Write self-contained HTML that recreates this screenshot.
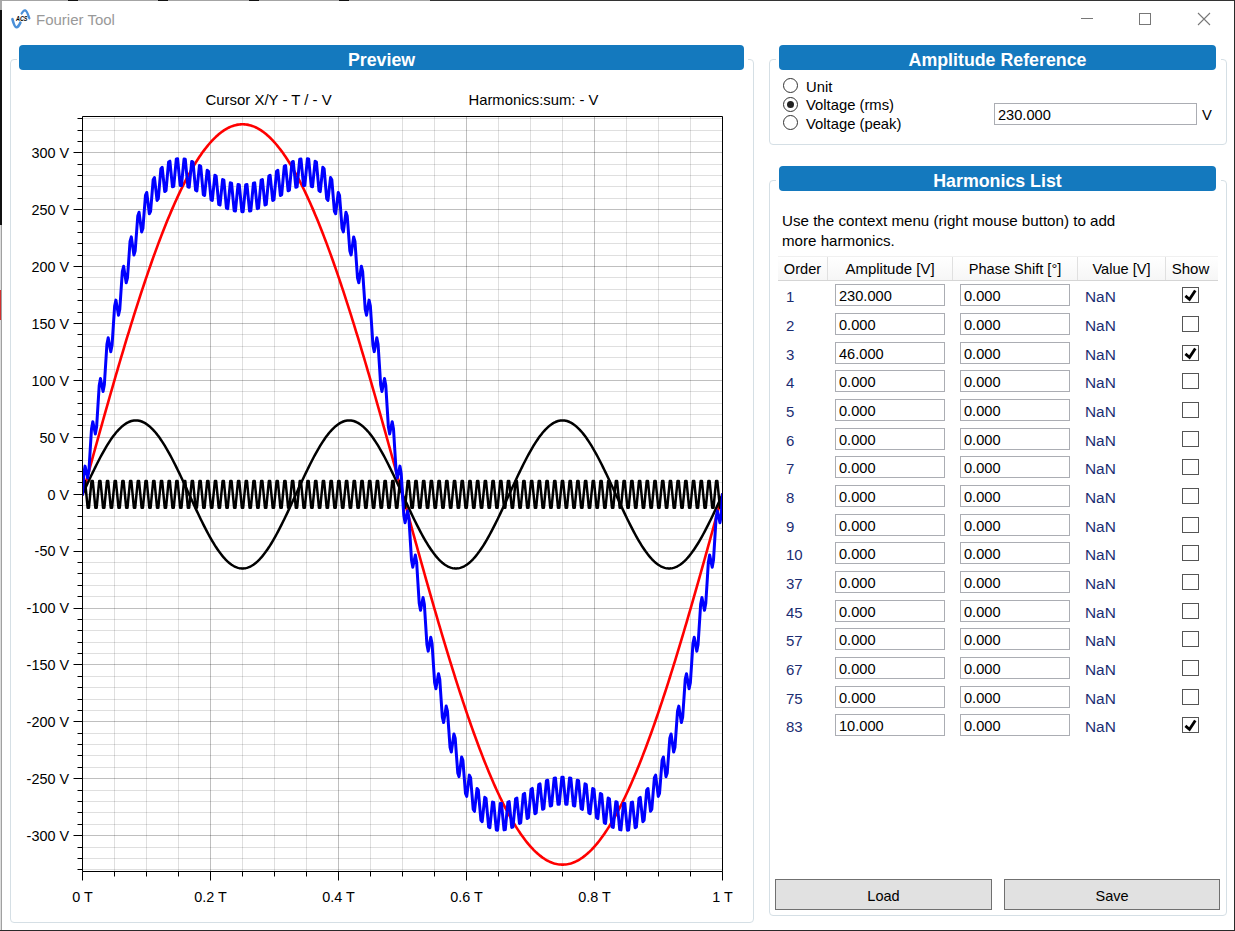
<!DOCTYPE html>
<html><head><meta charset="utf-8"><style>
html,body{margin:0;padding:0;}
body{width:1235px;height:931px;position:relative;overflow:hidden;background:#fff;font-family:"Liberation Sans", sans-serif;color:#000;}
.abs{position:absolute;}
.gb{position:absolute;border:1px solid #d5dfe5;border-radius:4px;box-sizing:border-box;}
.hdr{position:absolute;background:#1479be;border-radius:4px;color:#fff;font-weight:bold;font-size:17.8px;text-align:center;box-sizing:border-box;line-height:25px;padding-top:3px;}
.msk{position:absolute;background:#fff;height:3px;}
.tb{position:absolute;height:22px;border:1px solid #abadb3;box-sizing:border-box;font-size:14.6px;line-height:20px;padding-left:3px;padding-top:1px;background:#fff;}
.ord{position:absolute;left:786px;height:22px;line-height:22px;padding-top:1.5px;font-size:15px;color:#1b2d72;}
.nan{position:absolute;left:1085px;height:22px;line-height:22px;padding-top:1.5px;font-size:15.4px;color:#1b2d72;}
.cb{position:absolute;left:1182px;width:17px;height:16px;border:1px solid #555;box-sizing:border-box;background:#fff;}
.th{position:absolute;top:257px;height:24px;line-height:24px;font-size:14.6px;text-align:center;}
.btn{position:absolute;top:879px;height:31px;background:#e1e1e1;border:1px solid #707070;box-sizing:border-box;font-size:14.5px;line-height:29px;padding-top:2px;text-align:center;}
.rad{position:absolute;left:783px;width:15px;height:15px;border:1px solid #333;border-radius:50%;box-sizing:border-box;background:#fff;}
.rl{position:absolute;left:806px;font-size:14.8px;line-height:18px;}
</style></head><body>
<!-- window frame -->
<div class="abs" style="left:0;top:0;width:2px;height:10px;background:#a8a8a8"></div>
<div class="abs" style="left:0;top:10px;width:2px;height:215px;background:#111"></div>
<div class="abs" style="left:0;top:225px;width:1px;height:706px;background:#dcdcdc"></div>
<div class="abs" style="left:1px;top:225px;width:1px;height:706px;background:#a0a0a0"></div>
<div class="abs" style="left:0;top:290px;width:1px;height:30px;background:#d03030"></div>
<div class="abs" style="left:0;top:0;width:430px;height:1px;background:#a4a4a4"></div>
<div class="abs" style="left:68px;top:0;width:10px;height:1px;background:#111"></div>
<div class="abs" style="left:158px;top:0;width:10px;height:1px;background:#111"></div>
<div class="abs" style="left:249px;top:0;width:10px;height:1px;background:#111"></div>
<div class="abs" style="left:339px;top:0;width:10px;height:1px;background:#111"></div>
<div class="abs" style="left:430px;top:0;width:805px;height:1px;background:#333"></div>
<div class="abs" style="left:1234px;top:0;width:1px;height:931px;background:#2a2a2a"></div>
<div class="abs" style="left:0;top:930px;width:1235px;height:1px;background:#2a2a2a"></div>

<!-- title bar -->
<svg class="abs" style="left:0;top:0" width="40" height="36">
<path d="M12.4,19.2 Q14.6,27.6 16.5,27.3 Q18.4,27 20.4,22.6" stroke="#4a8fd8" stroke-width="2.6" fill="none" stroke-linecap="round"/>
<path d="M21.6,13.6 Q23.6,9.9 25.2,10.4 Q27,11 29.4,18.4" stroke="#4a8fd8" stroke-width="2.2" fill="none" stroke-linecap="round"/>
<text x="16" y="21.4" font-family='"Liberation Sans", sans-serif' font-size="7" font-weight="bold" font-style="italic" fill="#000" textLength="11.5" lengthAdjust="spacingAndGlyphs">ACS</text>
</svg>
<div class="abs" style="left:36px;top:10px;font-size:15px;line-height:20px;color:#999">Fourier Tool</div>
<div class="abs" style="left:1081px;top:18px;width:12px;height:1px;background:#777"></div>
<div class="abs" style="left:1139px;top:13px;width:12px;height:12px;border:1px solid #777;box-sizing:border-box"></div>
<svg class="abs" style="left:1197px;top:12px" width="14" height="14"><path d="M1,1 L13,13 M13,1 L1,13" stroke="#777" stroke-width="1.1"/></svg>

<!-- group boxes -->
<div class="gb" style="left:10px;top:59px;width:744px;height:864px"></div>
<div class="gb" style="left:769px;top:59px;width:458px;height:86px"></div>
<div class="gb" style="left:769px;top:180px;width:458px;height:736px"></div>
<div class="msk" style="left:17px;top:58px;width:731px"></div><div class="msk" style="left:776px;top:58px;width:445px"></div><div class="msk" style="left:776px;top:179px;width:445px"></div>
<div class="hdr" style="left:19px;top:45px;width:725px;height:25px">Preview</div>
<div class="hdr" style="left:779px;top:45px;width:437px;height:25px">Amplitude Reference</div>
<div class="hdr" style="left:779px;top:166px;width:437px;height:25px">Harmonics List</div>

<svg class="abs" style="left:0;top:0" width="1235" height="931"><defs><clipPath id="pc"><rect x="82" y="116" width="641" height="756"/></clipPath></defs><path d="M114.5,116.5V871.5M146.5,116.5V871.5M178.5,116.5V871.5M242.5,116.5V871.5M274.5,116.5V871.5M306.5,116.5V871.5M370.5,116.5V871.5M402.5,116.5V871.5M434.5,116.5V871.5M498.5,116.5V871.5M530.5,116.5V871.5M562.5,116.5V871.5M626.5,116.5V871.5M658.5,116.5V871.5M690.5,116.5V871.5M82.5,869.5H722.5M82.5,858.5H722.5M82.5,847.5H722.5M82.5,824.5H722.5M82.5,812.5H722.5M82.5,801.5H722.5M82.5,790.5H722.5M82.5,767.5H722.5M82.5,755.5H722.5M82.5,744.5H722.5M82.5,733.5H722.5M82.5,710.5H722.5M82.5,699.5H722.5M82.5,687.5H722.5M82.5,676.5H722.5M82.5,653.5H722.5M82.5,642.5H722.5M82.5,630.5H722.5M82.5,619.5H722.5M82.5,596.5H722.5M82.5,585.5H722.5M82.5,573.5H722.5M82.5,562.5H722.5M82.5,539.5H722.5M82.5,528.5H722.5M82.5,516.5H722.5M82.5,505.5H722.5M82.5,482.5H722.5M82.5,471.5H722.5M82.5,460.5H722.5M82.5,448.5H722.5M82.5,425.5H722.5M82.5,414.5H722.5M82.5,403.5H722.5M82.5,391.5H722.5M82.5,369.5H722.5M82.5,357.5H722.5M82.5,346.5H722.5M82.5,334.5H722.5M82.5,312.5H722.5M82.5,300.5H722.5M82.5,289.5H722.5M82.5,277.5H722.5M82.5,255.5H722.5M82.5,243.5H722.5M82.5,232.5H722.5M82.5,221.5H722.5M82.5,198.5H722.5M82.5,186.5H722.5M82.5,175.5H722.5M82.5,164.5H722.5M82.5,141.5H722.5M82.5,130.5H722.5M82.5,118.5H722.5" stroke="rgba(0,0,0,0.125)" stroke-width="1" fill="none"/><path d="M82.5,116.5V871.5M210.5,116.5V871.5M338.5,116.5V871.5M466.5,116.5V871.5M594.5,116.5V871.5M722.5,116.5V871.5M82.5,835.5H722.5M82.5,778.5H722.5M82.5,721.5H722.5M82.5,664.5H722.5M82.5,608.5H722.5M82.5,551.5H722.5M82.5,494.5H722.5M82.5,437.5H722.5M82.5,380.5H722.5M82.5,323.5H722.5M82.5,266.5H722.5M82.5,209.5H722.5M82.5,152.5H722.5" stroke="rgba(0,0,0,0.25)" stroke-width="1" fill="none"/><g clip-path="url(#pc)" fill="none" stroke-linejoin="round" stroke-linecap="round"><path d="M82.50,494.45 L83.79,489.78 L85.07,485.11 L86.36,480.44 L87.64,475.78 L88.93,471.11 L90.21,466.45 L91.50,461.80 L92.78,457.15 L94.07,452.50 L95.35,447.87 L96.64,443.24 L97.92,438.62 L99.21,434.00 L100.49,429.40 L101.78,424.81 L103.06,420.23 L104.35,415.66 L105.63,411.10 L106.92,406.56 L108.20,402.03 L109.49,397.51 L110.77,393.01 L112.06,388.53 L113.34,384.06 L114.63,379.61 L115.91,375.18 L117.20,370.77 L118.48,366.38 L119.77,362.00 L121.05,357.65 L122.34,353.32 L123.62,349.02 L124.91,344.73 L126.19,340.47 L127.48,336.24 L128.77,332.03 L130.05,327.85 L131.34,323.69 L132.62,319.56 L133.91,315.46 L135.19,311.38 L136.48,307.34 L137.76,303.32 L139.05,299.34 L140.33,295.38 L141.62,291.46 L142.90,287.57 L144.19,283.72 L145.47,279.89 L146.76,276.10 L148.04,272.35 L149.33,268.63 L150.61,264.95 L151.90,261.30 L153.18,257.69 L154.47,254.12 L155.75,250.59 L157.04,247.09 L158.32,243.64 L159.61,240.22 L160.89,236.85 L162.18,233.51 L163.46,230.22 L164.75,226.97 L166.03,223.76 L167.32,220.60 L168.60,217.48 L169.89,214.40 L171.17,211.37 L172.46,208.38 L173.74,205.44 L175.03,202.55 L176.32,199.70 L177.60,196.89 L178.89,194.14 L180.17,191.43 L181.46,188.77 L182.74,186.16 L184.03,183.60 L185.31,181.09 L186.60,178.63 L187.88,176.22 L189.17,173.86 L190.45,171.55 L191.74,169.29 L193.02,167.08 L194.31,164.93 L195.59,162.83 L196.88,160.78 L198.16,158.78 L199.45,156.84 L200.73,154.95 L202.02,153.11 L203.30,151.33 L204.59,149.61 L205.87,147.94 L207.16,146.32 L208.44,144.76 L209.73,143.26 L211.01,141.81 L212.30,140.41 L213.58,139.08 L214.87,137.80 L216.15,136.57 L217.44,135.41 L218.72,134.30 L220.01,133.25 L221.30,132.25 L222.58,131.32 L223.87,130.44 L225.15,129.62 L226.44,128.86 L227.72,128.15 L229.01,127.50 L230.29,126.92 L231.58,126.39 L232.86,125.92 L234.15,125.51 L235.43,125.15 L236.72,124.86 L238.00,124.62 L239.29,124.45 L240.57,124.33 L241.86,124.27 L243.14,124.27 L244.43,124.33 L245.71,124.45 L247.00,124.62 L248.28,124.86 L249.57,125.15 L250.85,125.51 L252.14,125.92 L253.42,126.39 L254.71,126.92 L255.99,127.50 L257.28,128.15 L258.56,128.86 L259.85,129.62 L261.13,130.44 L262.42,131.32 L263.70,132.25 L264.99,133.25 L266.28,134.30 L267.56,135.41 L268.85,136.57 L270.13,137.80 L271.42,139.08 L272.70,140.41 L273.99,141.81 L275.27,143.26 L276.56,144.76 L277.84,146.32 L279.13,147.94 L280.41,149.61 L281.70,151.33 L282.98,153.11 L284.27,154.95 L285.55,156.84 L286.84,158.78 L288.12,160.78 L289.41,162.83 L290.69,164.93 L291.98,167.08 L293.26,169.29 L294.55,171.55 L295.83,173.86 L297.12,176.22 L298.40,178.63 L299.69,181.09 L300.97,183.60 L302.26,186.16 L303.54,188.77 L304.83,191.43 L306.11,194.14 L307.40,196.89 L308.68,199.70 L309.97,202.55 L311.26,205.44 L312.54,208.38 L313.83,211.37 L315.11,214.40 L316.40,217.48 L317.68,220.60 L318.97,223.76 L320.25,226.97 L321.54,230.22 L322.82,233.51 L324.11,236.85 L325.39,240.22 L326.68,243.64 L327.96,247.09 L329.25,250.59 L330.53,254.12 L331.82,257.69 L333.10,261.30 L334.39,264.95 L335.67,268.63 L336.96,272.35 L338.24,276.10 L339.53,279.89 L340.81,283.72 L342.10,287.57 L343.38,291.46 L344.67,295.38 L345.95,299.34 L347.24,303.32 L348.52,307.34 L349.81,311.38 L351.09,315.46 L352.38,319.56 L353.66,323.69 L354.95,327.85 L356.23,332.03 L357.52,336.24 L358.81,340.47 L360.09,344.73 L361.38,349.02 L362.66,353.32 L363.95,357.65 L365.23,362.00 L366.52,366.38 L367.80,370.77 L369.09,375.18 L370.37,379.61 L371.66,384.06 L372.94,388.53 L374.23,393.01 L375.51,397.51 L376.80,402.03 L378.08,406.56 L379.37,411.10 L380.65,415.66 L381.94,420.23 L383.22,424.81 L384.51,429.40 L385.79,434.00 L387.08,438.62 L388.36,443.24 L389.65,447.87 L390.93,452.50 L392.22,457.15 L393.50,461.80 L394.79,466.45 L396.07,471.11 L397.36,475.78 L398.64,480.44 L399.93,485.11 L401.21,489.78 L402.50,494.45 L403.79,499.12 L405.07,503.79 L406.36,508.46 L407.64,513.12 L408.93,517.79 L410.21,522.45 L411.50,527.10 L412.78,531.75 L414.07,536.40 L415.35,541.03 L416.64,545.66 L417.92,550.28 L419.21,554.90 L420.49,559.50 L421.78,564.09 L423.06,568.67 L424.35,573.24 L425.63,577.80 L426.92,582.34 L428.20,586.87 L429.49,591.39 L430.77,595.89 L432.06,600.37 L433.34,604.84 L434.63,609.29 L435.91,613.72 L437.20,618.13 L438.48,622.52 L439.77,626.90 L441.05,631.25 L442.34,635.58 L443.62,639.88 L444.91,644.17 L446.19,648.43 L447.48,652.66 L448.77,656.87 L450.05,661.05 L451.34,665.21 L452.62,669.34 L453.91,673.44 L455.19,677.52 L456.48,681.56 L457.76,685.58 L459.05,689.56 L460.33,693.52 L461.62,697.44 L462.90,701.33 L464.19,705.18 L465.47,709.01 L466.76,712.80 L468.04,716.55 L469.33,720.27 L470.61,723.95 L471.90,727.60 L473.18,731.21 L474.47,734.78 L475.75,738.31 L477.04,741.81 L478.32,745.26 L479.61,748.68 L480.89,752.05 L482.18,755.39 L483.46,758.68 L484.75,761.93 L486.03,765.14 L487.32,768.30 L488.60,771.42 L489.89,774.50 L491.17,777.53 L492.46,780.52 L493.74,783.46 L495.03,786.35 L496.32,789.20 L497.60,792.01 L498.89,794.76 L500.17,797.47 L501.46,800.13 L502.74,802.74 L504.03,805.30 L505.31,807.81 L506.60,810.27 L507.88,812.68 L509.17,815.04 L510.45,817.35 L511.74,819.61 L513.02,821.82 L514.31,823.97 L515.59,826.07 L516.88,828.12 L518.16,830.12 L519.45,832.06 L520.73,833.95 L522.02,835.79 L523.30,837.57 L524.59,839.29 L525.87,840.96 L527.16,842.58 L528.44,844.14 L529.73,845.64 L531.01,847.09 L532.30,848.49 L533.58,849.82 L534.87,851.10 L536.15,852.33 L537.44,853.49 L538.72,854.60 L540.01,855.65 L541.30,856.65 L542.58,857.58 L543.87,858.46 L545.15,859.28 L546.44,860.04 L547.72,860.75 L549.01,861.40 L550.29,861.98 L551.58,862.51 L552.86,862.98 L554.15,863.39 L555.43,863.75 L556.72,864.04 L558.00,864.28 L559.29,864.45 L560.57,864.57 L561.86,864.63 L563.14,864.63 L564.43,864.57 L565.71,864.45 L567.00,864.28 L568.28,864.04 L569.57,863.75 L570.85,863.39 L572.14,862.98 L573.42,862.51 L574.71,861.98 L575.99,861.40 L577.28,860.75 L578.56,860.04 L579.85,859.28 L581.13,858.46 L582.42,857.58 L583.70,856.65 L584.99,855.65 L586.28,854.60 L587.56,853.49 L588.85,852.33 L590.13,851.10 L591.42,849.82 L592.70,848.49 L593.99,847.09 L595.27,845.64 L596.56,844.14 L597.84,842.58 L599.13,840.96 L600.41,839.29 L601.70,837.57 L602.98,835.79 L604.27,833.95 L605.55,832.06 L606.84,830.12 L608.12,828.12 L609.41,826.07 L610.69,823.97 L611.98,821.82 L613.26,819.61 L614.55,817.35 L615.83,815.04 L617.12,812.68 L618.40,810.27 L619.69,807.81 L620.97,805.30 L622.26,802.74 L623.54,800.13 L624.83,797.47 L626.11,794.76 L627.40,792.01 L628.68,789.20 L629.97,786.35 L631.26,783.46 L632.54,780.52 L633.83,777.53 L635.11,774.50 L636.40,771.42 L637.68,768.30 L638.97,765.14 L640.25,761.93 L641.54,758.68 L642.82,755.39 L644.11,752.05 L645.39,748.68 L646.68,745.26 L647.96,741.81 L649.25,738.31 L650.53,734.78 L651.82,731.21 L653.10,727.60 L654.39,723.95 L655.67,720.27 L656.96,716.55 L658.24,712.80 L659.53,709.01 L660.81,705.18 L662.10,701.33 L663.38,697.44 L664.67,693.52 L665.95,689.56 L667.24,685.58 L668.52,681.56 L669.81,677.52 L671.09,673.44 L672.38,669.34 L673.66,665.21 L674.95,661.05 L676.23,656.87 L677.52,652.66 L678.81,648.43 L680.09,644.17 L681.38,639.88 L682.66,635.58 L683.95,631.25 L685.23,626.90 L686.52,622.52 L687.80,618.13 L689.09,613.72 L690.37,609.29 L691.66,604.84 L692.94,600.37 L694.23,595.89 L695.51,591.39 L696.80,586.87 L698.08,582.34 L699.37,577.80 L700.65,573.24 L701.94,568.67 L703.22,564.09 L704.51,559.50 L705.79,554.90 L707.08,550.28 L708.36,545.66 L709.65,541.03 L710.93,536.40 L712.22,531.75 L713.50,527.10 L714.79,522.45 L716.07,517.79 L717.36,513.12 L718.64,508.46 L719.93,503.79 L721.21,499.12 L722.50,494.45" stroke="#ff0000" stroke-width="2.6"/><path d="M82.50,494.45 L83.79,491.65 L85.07,488.85 L86.36,486.06 L87.64,483.28 L88.93,480.52 L90.21,477.78 L91.50,475.06 L92.78,472.37 L94.07,469.71 L95.35,467.09 L96.64,464.51 L97.92,461.97 L99.21,459.47 L100.49,457.03 L101.78,454.64 L103.06,452.30 L104.35,450.03 L105.63,447.82 L106.92,445.68 L108.20,443.60 L109.49,441.60 L110.77,439.68 L112.06,437.83 L113.34,436.07 L114.63,434.39 L115.91,432.79 L117.20,431.29 L118.48,429.87 L119.77,428.55 L121.05,427.32 L122.34,426.18 L123.62,425.15 L124.91,424.21 L126.19,423.38 L127.48,422.64 L128.77,422.01 L130.05,421.48 L131.34,421.06 L132.62,420.74 L133.91,420.53 L135.19,420.43 L136.48,420.43 L137.76,420.53 L139.05,420.74 L140.33,421.06 L141.62,421.48 L142.90,422.01 L144.19,422.64 L145.47,423.38 L146.76,424.21 L148.04,425.15 L149.33,426.18 L150.61,427.32 L151.90,428.55 L153.18,429.87 L154.47,431.29 L155.75,432.79 L157.04,434.39 L158.32,436.07 L159.61,437.83 L160.89,439.68 L162.18,441.60 L163.46,443.60 L164.75,445.68 L166.03,447.82 L167.32,450.03 L168.60,452.30 L169.89,454.64 L171.17,457.03 L172.46,459.47 L173.74,461.97 L175.03,464.51 L176.32,467.09 L177.60,469.71 L178.89,472.37 L180.17,475.06 L181.46,477.78 L182.74,480.52 L184.03,483.28 L185.31,486.06 L186.60,488.85 L187.88,491.65 L189.17,494.45 L190.45,497.25 L191.74,500.05 L193.02,502.84 L194.31,505.62 L195.59,508.38 L196.88,511.12 L198.16,513.84 L199.45,516.53 L200.73,519.19 L202.02,521.81 L203.30,524.39 L204.59,526.93 L205.87,529.43 L207.16,531.87 L208.44,534.26 L209.73,536.60 L211.01,538.87 L212.30,541.08 L213.58,543.22 L214.87,545.30 L216.15,547.30 L217.44,549.22 L218.72,551.07 L220.01,552.83 L221.30,554.51 L222.58,556.11 L223.87,557.61 L225.15,559.03 L226.44,560.35 L227.72,561.58 L229.01,562.72 L230.29,563.75 L231.58,564.69 L232.86,565.52 L234.15,566.26 L235.43,566.89 L236.72,567.42 L238.00,567.84 L239.29,568.16 L240.57,568.37 L241.86,568.47 L243.14,568.47 L244.43,568.37 L245.71,568.16 L247.00,567.84 L248.28,567.42 L249.57,566.89 L250.85,566.26 L252.14,565.52 L253.42,564.69 L254.71,563.75 L255.99,562.72 L257.28,561.58 L258.56,560.35 L259.85,559.03 L261.13,557.61 L262.42,556.11 L263.70,554.51 L264.99,552.83 L266.28,551.07 L267.56,549.22 L268.85,547.30 L270.13,545.30 L271.42,543.22 L272.70,541.08 L273.99,538.87 L275.27,536.60 L276.56,534.26 L277.84,531.87 L279.13,529.43 L280.41,526.93 L281.70,524.39 L282.98,521.81 L284.27,519.19 L285.55,516.53 L286.84,513.84 L288.12,511.12 L289.41,508.38 L290.69,505.62 L291.98,502.84 L293.26,500.05 L294.55,497.25 L295.83,494.45 L297.12,491.65 L298.40,488.85 L299.69,486.06 L300.97,483.28 L302.26,480.52 L303.54,477.78 L304.83,475.06 L306.11,472.37 L307.40,469.71 L308.68,467.09 L309.97,464.51 L311.26,461.97 L312.54,459.47 L313.83,457.03 L315.11,454.64 L316.40,452.30 L317.68,450.03 L318.97,447.82 L320.25,445.68 L321.54,443.60 L322.82,441.60 L324.11,439.68 L325.39,437.83 L326.68,436.07 L327.96,434.39 L329.25,432.79 L330.53,431.29 L331.82,429.87 L333.10,428.55 L334.39,427.32 L335.67,426.18 L336.96,425.15 L338.24,424.21 L339.53,423.38 L340.81,422.64 L342.10,422.01 L343.38,421.48 L344.67,421.06 L345.95,420.74 L347.24,420.53 L348.52,420.43 L349.81,420.43 L351.09,420.53 L352.38,420.74 L353.66,421.06 L354.95,421.48 L356.23,422.01 L357.52,422.64 L358.81,423.38 L360.09,424.21 L361.38,425.15 L362.66,426.18 L363.95,427.32 L365.23,428.55 L366.52,429.87 L367.80,431.29 L369.09,432.79 L370.37,434.39 L371.66,436.07 L372.94,437.83 L374.23,439.68 L375.51,441.60 L376.80,443.60 L378.08,445.68 L379.37,447.82 L380.65,450.03 L381.94,452.30 L383.22,454.64 L384.51,457.03 L385.79,459.47 L387.08,461.97 L388.36,464.51 L389.65,467.09 L390.93,469.71 L392.22,472.37 L393.50,475.06 L394.79,477.78 L396.07,480.52 L397.36,483.28 L398.64,486.06 L399.93,488.85 L401.21,491.65 L402.50,494.45 L403.79,497.25 L405.07,500.05 L406.36,502.84 L407.64,505.62 L408.93,508.38 L410.21,511.12 L411.50,513.84 L412.78,516.53 L414.07,519.19 L415.35,521.81 L416.64,524.39 L417.92,526.93 L419.21,529.43 L420.49,531.87 L421.78,534.26 L423.06,536.60 L424.35,538.87 L425.63,541.08 L426.92,543.22 L428.20,545.30 L429.49,547.30 L430.77,549.22 L432.06,551.07 L433.34,552.83 L434.63,554.51 L435.91,556.11 L437.20,557.61 L438.48,559.03 L439.77,560.35 L441.05,561.58 L442.34,562.72 L443.62,563.75 L444.91,564.69 L446.19,565.52 L447.48,566.26 L448.77,566.89 L450.05,567.42 L451.34,567.84 L452.62,568.16 L453.91,568.37 L455.19,568.47 L456.48,568.47 L457.76,568.37 L459.05,568.16 L460.33,567.84 L461.62,567.42 L462.90,566.89 L464.19,566.26 L465.47,565.52 L466.76,564.69 L468.04,563.75 L469.33,562.72 L470.61,561.58 L471.90,560.35 L473.18,559.03 L474.47,557.61 L475.75,556.11 L477.04,554.51 L478.32,552.83 L479.61,551.07 L480.89,549.22 L482.18,547.30 L483.46,545.30 L484.75,543.22 L486.03,541.08 L487.32,538.87 L488.60,536.60 L489.89,534.26 L491.17,531.87 L492.46,529.43 L493.74,526.93 L495.03,524.39 L496.32,521.81 L497.60,519.19 L498.89,516.53 L500.17,513.84 L501.46,511.12 L502.74,508.38 L504.03,505.62 L505.31,502.84 L506.60,500.05 L507.88,497.25 L509.17,494.45 L510.45,491.65 L511.74,488.85 L513.02,486.06 L514.31,483.28 L515.59,480.52 L516.88,477.78 L518.16,475.06 L519.45,472.37 L520.73,469.71 L522.02,467.09 L523.30,464.51 L524.59,461.97 L525.87,459.47 L527.16,457.03 L528.44,454.64 L529.73,452.30 L531.01,450.03 L532.30,447.82 L533.58,445.68 L534.87,443.60 L536.15,441.60 L537.44,439.68 L538.72,437.83 L540.01,436.07 L541.30,434.39 L542.58,432.79 L543.87,431.29 L545.15,429.87 L546.44,428.55 L547.72,427.32 L549.01,426.18 L550.29,425.15 L551.58,424.21 L552.86,423.38 L554.15,422.64 L555.43,422.01 L556.72,421.48 L558.00,421.06 L559.29,420.74 L560.57,420.53 L561.86,420.43 L563.14,420.43 L564.43,420.53 L565.71,420.74 L567.00,421.06 L568.28,421.48 L569.57,422.01 L570.85,422.64 L572.14,423.38 L573.42,424.21 L574.71,425.15 L575.99,426.18 L577.28,427.32 L578.56,428.55 L579.85,429.87 L581.13,431.29 L582.42,432.79 L583.70,434.39 L584.99,436.07 L586.28,437.83 L587.56,439.68 L588.85,441.60 L590.13,443.60 L591.42,445.68 L592.70,447.82 L593.99,450.03 L595.27,452.30 L596.56,454.64 L597.84,457.03 L599.13,459.47 L600.41,461.97 L601.70,464.51 L602.98,467.09 L604.27,469.71 L605.55,472.37 L606.84,475.06 L608.12,477.78 L609.41,480.52 L610.69,483.28 L611.98,486.06 L613.26,488.85 L614.55,491.65 L615.83,494.45 L617.12,497.25 L618.40,500.05 L619.69,502.84 L620.97,505.62 L622.26,508.38 L623.54,511.12 L624.83,513.84 L626.11,516.53 L627.40,519.19 L628.68,521.81 L629.97,524.39 L631.26,526.93 L632.54,529.43 L633.83,531.87 L635.11,534.26 L636.40,536.60 L637.68,538.87 L638.97,541.08 L640.25,543.22 L641.54,545.30 L642.82,547.30 L644.11,549.22 L645.39,551.07 L646.68,552.83 L647.96,554.51 L649.25,556.11 L650.53,557.61 L651.82,559.03 L653.10,560.35 L654.39,561.58 L655.67,562.72 L656.96,563.75 L658.24,564.69 L659.53,565.52 L660.81,566.26 L662.10,566.89 L663.38,567.42 L664.67,567.84 L665.95,568.16 L667.24,568.37 L668.52,568.47 L669.81,568.47 L671.09,568.37 L672.38,568.16 L673.66,567.84 L674.95,567.42 L676.23,566.89 L677.52,566.26 L678.81,565.52 L680.09,564.69 L681.38,563.75 L682.66,562.72 L683.95,561.58 L685.23,560.35 L686.52,559.03 L687.80,557.61 L689.09,556.11 L690.37,554.51 L691.66,552.83 L692.94,551.07 L694.23,549.22 L695.51,547.30 L696.80,545.30 L698.08,543.22 L699.37,541.08 L700.65,538.87 L701.94,536.60 L703.22,534.26 L704.51,531.87 L705.79,529.43 L707.08,526.93 L708.36,524.39 L709.65,521.81 L710.93,519.19 L712.22,516.53 L713.50,513.84 L714.79,511.12 L716.07,508.38 L717.36,505.62 L718.64,502.84 L719.93,500.05 L721.21,497.25 L722.50,494.45" stroke="#000" stroke-width="2.5"/><path d="M82.50,494.45 L83.79,481.05 L85.07,481.05 L86.36,494.45 L87.64,507.85 L88.93,507.85 L90.21,494.45 L91.50,481.05 L92.78,481.05 L94.07,494.45 L95.35,507.85 L96.64,507.85 L97.92,494.45 L99.21,481.05 L100.49,481.05 L101.78,494.45 L103.06,507.85 L104.35,507.85 L105.63,494.45 L106.92,481.05 L108.20,481.05 L109.49,494.45 L110.77,507.85 L112.06,507.85 L113.34,494.45 L114.63,481.05 L115.91,481.05 L117.20,494.45 L118.48,507.85 L119.77,507.85 L121.05,494.45 L122.34,481.05 L123.62,481.05 L124.91,494.45 L126.19,507.85 L127.48,507.85 L128.77,494.45 L130.05,481.05 L131.34,481.05 L132.62,494.45 L133.91,507.85 L135.19,507.85 L136.48,494.45 L137.76,481.05 L139.05,481.05 L140.33,494.45 L141.62,507.85 L142.90,507.85 L144.19,494.45 L145.47,481.05 L146.76,481.05 L148.04,494.45 L149.33,507.85 L150.61,507.85 L151.90,494.45 L153.18,481.05 L154.47,481.05 L155.75,494.45 L157.04,507.85 L158.32,507.85 L159.61,494.45 L160.89,481.05 L162.18,481.05 L163.46,494.45 L164.75,507.85 L166.03,507.85 L167.32,494.45 L168.60,481.05 L169.89,481.05 L171.17,494.45 L172.46,507.85 L173.74,507.85 L175.03,494.45 L176.32,481.05 L177.60,481.05 L178.89,494.45 L180.17,507.85 L181.46,507.85 L182.74,494.45 L184.03,481.05 L185.31,481.05 L186.60,494.45 L187.88,507.85 L189.17,507.85 L190.45,494.45 L191.74,481.05 L193.02,481.05 L194.31,494.45 L195.59,507.85 L196.88,507.85 L198.16,494.45 L199.45,481.05 L200.73,481.05 L202.02,494.45 L203.30,507.85 L204.59,507.85 L205.87,494.45 L207.16,481.05 L208.44,481.05 L209.73,494.45 L211.01,507.85 L212.30,507.85 L213.58,494.45 L214.87,481.05 L216.15,481.05 L217.44,494.45 L218.72,507.85 L220.01,507.85 L221.30,494.45 L222.58,481.05 L223.87,481.05 L225.15,494.45 L226.44,507.85 L227.72,507.85 L229.01,494.45 L230.29,481.05 L231.58,481.05 L232.86,494.45 L234.15,507.85 L235.43,507.85 L236.72,494.45 L238.00,481.05 L239.29,481.05 L240.57,494.45 L241.86,507.85 L243.14,507.85 L244.43,494.45 L245.71,481.05 L247.00,481.05 L248.28,494.45 L249.57,507.85 L250.85,507.85 L252.14,494.45 L253.42,481.05 L254.71,481.05 L255.99,494.45 L257.28,507.85 L258.56,507.85 L259.85,494.45 L261.13,481.05 L262.42,481.05 L263.70,494.45 L264.99,507.85 L266.28,507.85 L267.56,494.45 L268.85,481.05 L270.13,481.05 L271.42,494.45 L272.70,507.85 L273.99,507.85 L275.27,494.45 L276.56,481.05 L277.84,481.05 L279.13,494.45 L280.41,507.85 L281.70,507.85 L282.98,494.45 L284.27,481.05 L285.55,481.05 L286.84,494.45 L288.12,507.85 L289.41,507.85 L290.69,494.45 L291.98,481.05 L293.26,481.05 L294.55,494.45 L295.83,507.85 L297.12,507.85 L298.40,494.45 L299.69,481.05 L300.97,481.05 L302.26,494.45 L303.54,507.85 L304.83,507.85 L306.11,494.45 L307.40,481.05 L308.68,481.05 L309.97,494.45 L311.26,507.85 L312.54,507.85 L313.83,494.45 L315.11,481.05 L316.40,481.05 L317.68,494.45 L318.97,507.85 L320.25,507.85 L321.54,494.45 L322.82,481.05 L324.11,481.05 L325.39,494.45 L326.68,507.85 L327.96,507.85 L329.25,494.45 L330.53,481.05 L331.82,481.05 L333.10,494.45 L334.39,507.85 L335.67,507.85 L336.96,494.45 L338.24,481.05 L339.53,481.05 L340.81,494.45 L342.10,507.85 L343.38,507.85 L344.67,494.45 L345.95,481.05 L347.24,481.05 L348.52,494.45 L349.81,507.85 L351.09,507.85 L352.38,494.45 L353.66,481.05 L354.95,481.05 L356.23,494.45 L357.52,507.85 L358.81,507.85 L360.09,494.45 L361.38,481.05 L362.66,481.05 L363.95,494.45 L365.23,507.85 L366.52,507.85 L367.80,494.45 L369.09,481.05 L370.37,481.05 L371.66,494.45 L372.94,507.85 L374.23,507.85 L375.51,494.45 L376.80,481.05 L378.08,481.05 L379.37,494.45 L380.65,507.85 L381.94,507.85 L383.22,494.45 L384.51,481.05 L385.79,481.05 L387.08,494.45 L388.36,507.85 L389.65,507.85 L390.93,494.45 L392.22,481.05 L393.50,481.05 L394.79,494.45 L396.07,507.85 L397.36,507.85 L398.64,494.45 L399.93,481.05 L401.21,481.05 L402.50,494.45 L403.79,507.85 L405.07,507.85 L406.36,494.45 L407.64,481.05 L408.93,481.05 L410.21,494.45 L411.50,507.85 L412.78,507.85 L414.07,494.45 L415.35,481.05 L416.64,481.05 L417.92,494.45 L419.21,507.85 L420.49,507.85 L421.78,494.45 L423.06,481.05 L424.35,481.05 L425.63,494.45 L426.92,507.85 L428.20,507.85 L429.49,494.45 L430.77,481.05 L432.06,481.05 L433.34,494.45 L434.63,507.85 L435.91,507.85 L437.20,494.45 L438.48,481.05 L439.77,481.05 L441.05,494.45 L442.34,507.85 L443.62,507.85 L444.91,494.45 L446.19,481.05 L447.48,481.05 L448.77,494.45 L450.05,507.85 L451.34,507.85 L452.62,494.45 L453.91,481.05 L455.19,481.05 L456.48,494.45 L457.76,507.85 L459.05,507.85 L460.33,494.45 L461.62,481.05 L462.90,481.05 L464.19,494.45 L465.47,507.85 L466.76,507.85 L468.04,494.45 L469.33,481.05 L470.61,481.05 L471.90,494.45 L473.18,507.85 L474.47,507.85 L475.75,494.45 L477.04,481.05 L478.32,481.05 L479.61,494.45 L480.89,507.85 L482.18,507.85 L483.46,494.45 L484.75,481.05 L486.03,481.05 L487.32,494.45 L488.60,507.85 L489.89,507.85 L491.17,494.45 L492.46,481.05 L493.74,481.05 L495.03,494.45 L496.32,507.85 L497.60,507.85 L498.89,494.45 L500.17,481.05 L501.46,481.05 L502.74,494.45 L504.03,507.85 L505.31,507.85 L506.60,494.45 L507.88,481.05 L509.17,481.05 L510.45,494.45 L511.74,507.85 L513.02,507.85 L514.31,494.45 L515.59,481.05 L516.88,481.05 L518.16,494.45 L519.45,507.85 L520.73,507.85 L522.02,494.45 L523.30,481.05 L524.59,481.05 L525.87,494.45 L527.16,507.85 L528.44,507.85 L529.73,494.45 L531.01,481.05 L532.30,481.05 L533.58,494.45 L534.87,507.85 L536.15,507.85 L537.44,494.45 L538.72,481.05 L540.01,481.05 L541.30,494.45 L542.58,507.85 L543.87,507.85 L545.15,494.45 L546.44,481.05 L547.72,481.05 L549.01,494.45 L550.29,507.85 L551.58,507.85 L552.86,494.45 L554.15,481.05 L555.43,481.05 L556.72,494.45 L558.00,507.85 L559.29,507.85 L560.57,494.45 L561.86,481.05 L563.14,481.05 L564.43,494.45 L565.71,507.85 L567.00,507.85 L568.28,494.45 L569.57,481.05 L570.85,481.05 L572.14,494.45 L573.42,507.85 L574.71,507.85 L575.99,494.45 L577.28,481.05 L578.56,481.05 L579.85,494.45 L581.13,507.85 L582.42,507.85 L583.70,494.45 L584.99,481.05 L586.28,481.05 L587.56,494.45 L588.85,507.85 L590.13,507.85 L591.42,494.45 L592.70,481.05 L593.99,481.05 L595.27,494.45 L596.56,507.85 L597.84,507.85 L599.13,494.45 L600.41,481.05 L601.70,481.05 L602.98,494.45 L604.27,507.85 L605.55,507.85 L606.84,494.45 L608.12,481.05 L609.41,481.05 L610.69,494.45 L611.98,507.85 L613.26,507.85 L614.55,494.45 L615.83,481.05 L617.12,481.05 L618.40,494.45 L619.69,507.85 L620.97,507.85 L622.26,494.45 L623.54,481.05 L624.83,481.05 L626.11,494.45 L627.40,507.85 L628.68,507.85 L629.97,494.45 L631.26,481.05 L632.54,481.05 L633.83,494.45 L635.11,507.85 L636.40,507.85 L637.68,494.45 L638.97,481.05 L640.25,481.05 L641.54,494.45 L642.82,507.85 L644.11,507.85 L645.39,494.45 L646.68,481.05 L647.96,481.05 L649.25,494.45 L650.53,507.85 L651.82,507.85 L653.10,494.45 L654.39,481.05 L655.67,481.05 L656.96,494.45 L658.24,507.85 L659.53,507.85 L660.81,494.45 L662.10,481.05 L663.38,481.05 L664.67,494.45 L665.95,507.85 L667.24,507.85 L668.52,494.45 L669.81,481.05 L671.09,481.05 L672.38,494.45 L673.66,507.85 L674.95,507.85 L676.23,494.45 L677.52,481.05 L678.81,481.05 L680.09,494.45 L681.38,507.85 L682.66,507.85 L683.95,494.45 L685.23,481.05 L686.52,481.05 L687.80,494.45 L689.09,507.85 L690.37,507.85 L691.66,494.45 L692.94,481.05 L694.23,481.05 L695.51,494.45 L696.80,507.85 L698.08,507.85 L699.37,494.45 L700.65,481.05 L701.94,481.05 L703.22,494.45 L704.51,507.85 L705.79,507.85 L707.08,494.45 L708.36,481.05 L709.65,481.05 L710.93,494.45 L712.22,507.85 L713.50,507.85 L714.79,494.45 L716.07,481.05 L717.36,481.05 L718.64,494.45 L719.93,507.85 L721.21,507.85 L722.50,494.45" stroke="#000" stroke-width="2.5"/><path d="M82.50,494.45 L83.79,473.57 L85.07,466.11 L86.36,472.05 L87.64,478.01 L88.93,470.59 L90.21,449.78 L91.50,429.01 L92.78,421.67 L94.07,427.77 L95.35,433.91 L96.64,426.70 L97.92,406.13 L99.21,385.62 L100.49,378.57 L101.78,385.00 L103.06,391.48 L104.35,384.64 L105.63,364.47 L106.92,344.38 L108.20,337.78 L109.49,344.67 L110.77,351.65 L112.06,345.32 L113.34,325.68 L114.63,306.14 L115.91,300.12 L117.20,307.60 L118.48,315.20 L119.77,309.50 L121.05,290.52 L122.34,271.65 L123.62,266.31 L124.91,274.50 L126.19,282.80 L127.48,277.84 L128.77,259.59 L130.05,241.48 L131.34,236.89 L132.62,245.85 L133.91,254.94 L135.19,250.76 L136.48,233.31 L137.76,216.00 L139.05,212.23 L140.33,221.99 L141.62,231.90 L142.90,228.54 L144.19,211.91 L145.47,195.41 L146.76,192.46 L148.04,203.05 L149.33,213.77 L150.61,211.22 L151.90,195.40 L153.18,179.71 L154.47,177.55 L155.75,188.93 L157.04,200.44 L158.32,198.66 L159.61,183.61 L160.89,168.67 L162.18,167.26 L163.46,179.38 L164.75,191.60 L166.03,190.54 L167.32,176.18 L168.60,161.93 L169.89,161.18 L171.17,173.95 L172.46,186.81 L173.74,186.36 L175.03,172.60 L176.32,158.93 L177.60,158.75 L178.89,172.06 L180.17,185.45 L181.46,185.51 L182.74,172.24 L184.03,159.03 L185.31,159.30 L186.60,173.03 L187.88,186.82 L189.17,187.26 L190.45,174.35 L191.74,161.48 L193.02,162.07 L194.31,176.09 L195.59,190.16 L196.88,190.85 L198.16,178.17 L199.45,165.51 L200.73,166.28 L202.02,180.47 L203.30,194.68 L204.59,195.50 L205.87,182.92 L207.16,170.34 L208.44,171.17 L209.73,185.40 L211.01,199.63 L212.30,200.45 L213.58,187.85 L214.87,175.24 L216.15,176.02 L217.44,190.18 L218.72,204.32 L220.01,205.03 L221.30,192.32 L222.58,179.57 L223.87,180.20 L225.15,194.20 L226.44,208.16 L227.72,208.69 L229.01,195.77 L230.29,182.82 L231.58,183.22 L232.86,196.99 L234.15,210.72 L235.43,211.00 L236.72,197.82 L238.00,184.61 L239.29,184.75 L240.57,198.25 L241.86,211.70 L243.14,211.70 L244.43,198.25 L245.71,184.75 L247.00,184.61 L248.28,197.82 L249.57,211.00 L250.85,210.72 L252.14,196.99 L253.42,183.22 L254.71,182.82 L255.99,195.77 L257.28,208.69 L258.56,208.16 L259.85,194.20 L261.13,180.20 L262.42,179.57 L263.70,192.32 L264.99,205.03 L266.28,204.32 L267.56,190.18 L268.85,176.02 L270.13,175.24 L271.42,187.85 L272.70,200.45 L273.99,199.63 L275.27,185.40 L276.56,171.17 L277.84,170.34 L279.13,182.92 L280.41,195.50 L281.70,194.68 L282.98,180.47 L284.27,166.28 L285.55,165.51 L286.84,178.17 L288.12,190.85 L289.41,190.16 L290.69,176.09 L291.98,162.07 L293.26,161.48 L294.55,174.35 L295.83,187.26 L297.12,186.82 L298.40,173.03 L299.69,159.30 L300.97,159.03 L302.26,172.24 L303.54,185.51 L304.83,185.45 L306.11,172.06 L307.40,158.75 L308.68,158.93 L309.97,172.60 L311.26,186.36 L312.54,186.81 L313.83,173.95 L315.11,161.18 L316.40,161.93 L317.68,176.18 L318.97,190.54 L320.25,191.60 L321.54,179.38 L322.82,167.26 L324.11,168.67 L325.39,183.61 L326.68,198.66 L327.96,200.44 L329.25,188.93 L330.53,177.55 L331.82,179.71 L333.10,195.40 L334.39,211.22 L335.67,213.77 L336.96,203.05 L338.24,192.46 L339.53,195.41 L340.81,211.91 L342.10,228.54 L343.38,231.90 L344.67,221.99 L345.95,212.23 L347.24,216.00 L348.52,233.31 L349.81,250.76 L351.09,254.94 L352.38,245.85 L353.66,236.89 L354.95,241.48 L356.23,259.59 L357.52,277.84 L358.81,282.80 L360.09,274.50 L361.38,266.31 L362.66,271.65 L363.95,290.52 L365.23,309.50 L366.52,315.20 L367.80,307.60 L369.09,300.12 L370.37,306.14 L371.66,325.68 L372.94,345.32 L374.23,351.65 L375.51,344.67 L376.80,337.78 L378.08,344.38 L379.37,364.47 L380.65,384.64 L381.94,391.48 L383.22,385.00 L384.51,378.57 L385.79,385.62 L387.08,406.13 L388.36,426.70 L389.65,433.91 L390.93,427.77 L392.22,421.67 L393.50,429.01 L394.79,449.78 L396.07,470.59 L397.36,478.01 L398.64,472.05 L399.93,466.11 L401.21,473.57 L402.50,494.45 L403.79,515.33 L405.07,522.79 L406.36,516.85 L407.64,510.89 L408.93,518.31 L410.21,539.12 L411.50,559.89 L412.78,567.23 L414.07,561.13 L415.35,554.99 L416.64,562.20 L417.92,582.77 L419.21,603.28 L420.49,610.33 L421.78,603.90 L423.06,597.42 L424.35,604.26 L425.63,624.43 L426.92,644.52 L428.20,651.12 L429.49,644.23 L430.77,637.25 L432.06,643.58 L433.34,663.22 L434.63,682.76 L435.91,688.78 L437.20,681.30 L438.48,673.70 L439.77,679.40 L441.05,698.38 L442.34,717.25 L443.62,722.59 L444.91,714.40 L446.19,706.10 L447.48,711.06 L448.77,729.31 L450.05,747.42 L451.34,752.01 L452.62,743.05 L453.91,733.96 L455.19,738.14 L456.48,755.59 L457.76,772.90 L459.05,776.67 L460.33,766.91 L461.62,757.00 L462.90,760.36 L464.19,776.99 L465.47,793.49 L466.76,796.44 L468.04,785.85 L469.33,775.13 L470.61,777.68 L471.90,793.50 L473.18,809.19 L474.47,811.35 L475.75,799.97 L477.04,788.46 L478.32,790.24 L479.61,805.29 L480.89,820.23 L482.18,821.64 L483.46,809.52 L484.75,797.30 L486.03,798.36 L487.32,812.72 L488.60,826.97 L489.89,827.72 L491.17,814.95 L492.46,802.09 L493.74,802.54 L495.03,816.30 L496.32,829.97 L497.60,830.15 L498.89,816.84 L500.17,803.45 L501.46,803.39 L502.74,816.66 L504.03,829.87 L505.31,829.60 L506.60,815.87 L507.88,802.08 L509.17,801.64 L510.45,814.55 L511.74,827.42 L513.02,826.83 L514.31,812.81 L515.59,798.74 L516.88,798.05 L518.16,810.73 L519.45,823.39 L520.73,822.62 L522.02,808.43 L523.30,794.22 L524.59,793.40 L525.87,805.98 L527.16,818.56 L528.44,817.73 L529.73,803.50 L531.01,789.27 L532.30,788.45 L533.58,801.05 L534.87,813.66 L536.15,812.88 L537.44,798.72 L538.72,784.58 L540.01,783.87 L541.30,796.58 L542.58,809.33 L543.87,808.70 L545.15,794.70 L546.44,780.74 L547.72,780.21 L549.01,793.13 L550.29,806.08 L551.58,805.68 L552.86,791.91 L554.15,778.18 L555.43,777.90 L556.72,791.08 L558.00,804.29 L559.29,804.15 L560.57,790.65 L561.86,777.20 L563.14,777.20 L564.43,790.65 L565.71,804.15 L567.00,804.29 L568.28,791.08 L569.57,777.90 L570.85,778.18 L572.14,791.91 L573.42,805.68 L574.71,806.08 L575.99,793.13 L577.28,780.21 L578.56,780.74 L579.85,794.70 L581.13,808.70 L582.42,809.33 L583.70,796.58 L584.99,783.87 L586.28,784.58 L587.56,798.72 L588.85,812.88 L590.13,813.66 L591.42,801.05 L592.70,788.45 L593.99,789.27 L595.27,803.50 L596.56,817.73 L597.84,818.56 L599.13,805.98 L600.41,793.40 L601.70,794.22 L602.98,808.43 L604.27,822.62 L605.55,823.39 L606.84,810.73 L608.12,798.05 L609.41,798.74 L610.69,812.81 L611.98,826.83 L613.26,827.42 L614.55,814.55 L615.83,801.64 L617.12,802.08 L618.40,815.87 L619.69,829.60 L620.97,829.87 L622.26,816.66 L623.54,803.39 L624.83,803.45 L626.11,816.84 L627.40,830.15 L628.68,829.97 L629.97,816.30 L631.26,802.54 L632.54,802.09 L633.83,814.95 L635.11,827.72 L636.40,826.97 L637.68,812.72 L638.97,798.36 L640.25,797.30 L641.54,809.52 L642.82,821.64 L644.11,820.23 L645.39,805.29 L646.68,790.24 L647.96,788.46 L649.25,799.97 L650.53,811.35 L651.82,809.19 L653.10,793.50 L654.39,777.68 L655.67,775.13 L656.96,785.85 L658.24,796.44 L659.53,793.49 L660.81,776.99 L662.10,760.36 L663.38,757.00 L664.67,766.91 L665.95,776.67 L667.24,772.90 L668.52,755.59 L669.81,738.14 L671.09,733.96 L672.38,743.05 L673.66,752.01 L674.95,747.42 L676.23,729.31 L677.52,711.06 L678.81,706.10 L680.09,714.40 L681.38,722.59 L682.66,717.25 L683.95,698.38 L685.23,679.40 L686.52,673.70 L687.80,681.30 L689.09,688.78 L690.37,682.76 L691.66,663.22 L692.94,643.58 L694.23,637.25 L695.51,644.23 L696.80,651.12 L698.08,644.52 L699.37,624.43 L700.65,604.26 L701.94,597.42 L703.22,603.90 L704.51,610.33 L705.79,603.28 L707.08,582.77 L708.36,562.20 L709.65,554.99 L710.93,561.13 L712.22,567.23 L713.50,559.89 L714.79,539.12 L716.07,518.31 L717.36,510.89 L718.64,516.85 L719.93,522.79 L721.21,515.33 L722.50,494.45" stroke="#0000ff" stroke-width="3"/></g><path d="M82.5,116.5H722.5V871.5H82.5ZM82.5,871.5v9M114.5,871.5v5M146.5,871.5v5M178.5,871.5v5M210.5,871.5v9M242.5,871.5v5M274.5,871.5v5M306.5,871.5v5M338.5,871.5v9M370.5,871.5v5M402.5,871.5v5M434.5,871.5v5M466.5,871.5v9M498.5,871.5v5M530.5,871.5v5M562.5,871.5v5M594.5,871.5v9M626.5,871.5v5M658.5,871.5v5M690.5,871.5v5M722.5,871.5v9M82.5,869.5h-5M82.5,858.5h-5M82.5,847.5h-5M82.5,835.5h-9M82.5,824.5h-5M82.5,812.5h-5M82.5,801.5h-5M82.5,790.5h-5M82.5,778.5h-9M82.5,767.5h-5M82.5,755.5h-5M82.5,744.5h-5M82.5,733.5h-5M82.5,721.5h-9M82.5,710.5h-5M82.5,699.5h-5M82.5,687.5h-5M82.5,676.5h-5M82.5,664.5h-9M82.5,653.5h-5M82.5,642.5h-5M82.5,630.5h-5M82.5,619.5h-5M82.5,608.5h-9M82.5,596.5h-5M82.5,585.5h-5M82.5,573.5h-5M82.5,562.5h-5M82.5,551.5h-9M82.5,539.5h-5M82.5,528.5h-5M82.5,516.5h-5M82.5,505.5h-5M82.5,494.5h-9M82.5,482.5h-5M82.5,471.5h-5M82.5,460.5h-5M82.5,448.5h-5M82.5,437.5h-9M82.5,425.5h-5M82.5,414.5h-5M82.5,403.5h-5M82.5,391.5h-5M82.5,380.5h-9M82.5,369.5h-5M82.5,357.5h-5M82.5,346.5h-5M82.5,334.5h-5M82.5,323.5h-9M82.5,312.5h-5M82.5,300.5h-5M82.5,289.5h-5M82.5,277.5h-5M82.5,266.5h-9M82.5,255.5h-5M82.5,243.5h-5M82.5,232.5h-5M82.5,221.5h-5M82.5,209.5h-9M82.5,198.5h-5M82.5,186.5h-5M82.5,175.5h-5M82.5,164.5h-5M82.5,152.5h-9M82.5,141.5h-5M82.5,130.5h-5M82.5,118.5h-5" stroke="#000" stroke-width="1" fill="none"/><g font-family='"Liberation Sans", sans-serif' font-size="14.4" fill="#000"><text x="69" y="840.93" text-anchor="end">-300 V</text><text x="69" y="784.02" text-anchor="end">-250 V</text><text x="69" y="727.12" text-anchor="end">-200 V</text><text x="69" y="670.21" text-anchor="end">-150 V</text><text x="69" y="613.31" text-anchor="end">-100 V</text><text x="69" y="556.40" text-anchor="end">-50 V</text><text x="69" y="499.50" text-anchor="end">0 V</text><text x="69" y="442.60" text-anchor="end">50 V</text><text x="69" y="385.69" text-anchor="end">100 V</text><text x="69" y="328.79" text-anchor="end">150 V</text><text x="69" y="271.88" text-anchor="end">200 V</text><text x="69" y="214.98" text-anchor="end">250 V</text><text x="69" y="158.07" text-anchor="end">300 V</text><text x="82.5" y="901.5" text-anchor="middle">0 T</text><text x="210.5" y="901.5" text-anchor="middle">0.2 T</text><text x="338.5" y="901.5" text-anchor="middle">0.4 T</text><text x="466.5" y="901.5" text-anchor="middle">0.6 T</text><text x="594.5" y="901.5" text-anchor="middle">0.8 T</text><text x="722.5" y="901.5" text-anchor="middle">1 T</text></g><text x="205.5" y="104.5" font-family='"Liberation Sans", sans-serif' font-size="14.95" fill="#000">Cursor X/Y - T / - V</text><text x="468.5" y="104.5" font-family='"Liberation Sans", sans-serif' font-size="14.8" fill="#000">Harmonics:sum: - V</text></svg>

<!-- amplitude reference -->
<div class="rad" style="top:78px"></div>
<div class="rad" style="top:97px"><div style="position:absolute;left:3px;top:3px;width:7px;height:7px;border-radius:50%;background:#222"></div></div>
<div class="rad" style="top:115px"></div>
<div class="rl" style="top:77.8px">Unit</div>
<div class="rl" style="top:95.5px">Voltage (rms)</div>
<div class="rl" style="top:114.5px">Voltage (peak)</div>
<div class="tb" style="left:994px;top:103px;width:203px">230.000</div>
<div class="abs" style="left:1202px;top:105px;font-size:14.8px;line-height:20px">V</div>

<!-- harmonics list -->
<div class="abs" style="left:782px;top:211px;font-size:15.15px;line-height:20.3px;width:400px">Use the context menu (right mouse button) to add<br>more harmonics.</div>
<div class="abs" style="left:778px;top:256px;width:440px;height:25px;background:linear-gradient(#ffffff,#f6f6f6);border-top:1px solid #f0f0f0;border-bottom:1px solid #d5d5d5;box-sizing:border-box"></div>
<div class="abs" style="left:827px;top:257px;width:1px;height:23px;background:#e0e0e0"></div>
<div class="abs" style="left:952px;top:257px;width:1px;height:23px;background:#e0e0e0"></div>
<div class="abs" style="left:1077px;top:257px;width:1px;height:23px;background:#e0e0e0"></div>
<div class="abs" style="left:1165px;top:257px;width:1px;height:23px;background:#e0e0e0"></div>
<div class="th" style="left:778px;width:49px">Order</div>
<div class="th" style="left:828px;width:124px;font-size:15px">Amplitude [V]</div>
<div class="th" style="left:953px;width:124px">Phase Shift [°]</div>
<div class="th" style="left:1078px;width:87px">Value [V]</div>
<div class="th" style="left:1165px;width:51px;font-size:15px">Show</div>
<div class="ord" style="top:284px">1</div><div class="tb" style="left:835px;top:284px;width:110px">230.000</div><div class="tb" style="left:960px;top:284px;width:110px">0.000</div><div class="nan" style="top:284px">NaN</div><div class="cb" style="top:287px"><svg width="16" height="16" style="position:absolute;left:0;top:0"><path d="M2.4,7.9 L6.5,11.3 L12.3,2.5" stroke="#000" stroke-width="2.8" fill="none" stroke-linejoin="miter"/></svg></div><div class="ord" style="top:313px">2</div><div class="tb" style="left:835px;top:313px;width:110px">0.000</div><div class="tb" style="left:960px;top:313px;width:110px">0.000</div><div class="nan" style="top:313px">NaN</div><div class="cb" style="top:316px"></div><div class="ord" style="top:342px">3</div><div class="tb" style="left:835px;top:342px;width:110px">46.000</div><div class="tb" style="left:960px;top:342px;width:110px">0.000</div><div class="nan" style="top:342px">NaN</div><div class="cb" style="top:345px"><svg width="16" height="16" style="position:absolute;left:0;top:0"><path d="M2.4,7.9 L6.5,11.3 L12.3,2.5" stroke="#000" stroke-width="2.8" fill="none" stroke-linejoin="miter"/></svg></div><div class="ord" style="top:370px">4</div><div class="tb" style="left:835px;top:370px;width:110px">0.000</div><div class="tb" style="left:960px;top:370px;width:110px">0.000</div><div class="nan" style="top:370px">NaN</div><div class="cb" style="top:373px"></div><div class="ord" style="top:399px">5</div><div class="tb" style="left:835px;top:399px;width:110px">0.000</div><div class="tb" style="left:960px;top:399px;width:110px">0.000</div><div class="nan" style="top:399px">NaN</div><div class="cb" style="top:402px"></div><div class="ord" style="top:428px">6</div><div class="tb" style="left:835px;top:428px;width:110px">0.000</div><div class="tb" style="left:960px;top:428px;width:110px">0.000</div><div class="nan" style="top:428px">NaN</div><div class="cb" style="top:431px"></div><div class="ord" style="top:456px">7</div><div class="tb" style="left:835px;top:456px;width:110px">0.000</div><div class="tb" style="left:960px;top:456px;width:110px">0.000</div><div class="nan" style="top:456px">NaN</div><div class="cb" style="top:459px"></div><div class="ord" style="top:485px">8</div><div class="tb" style="left:835px;top:485px;width:110px">0.000</div><div class="tb" style="left:960px;top:485px;width:110px">0.000</div><div class="nan" style="top:485px">NaN</div><div class="cb" style="top:488px"></div><div class="ord" style="top:514px">9</div><div class="tb" style="left:835px;top:514px;width:110px">0.000</div><div class="tb" style="left:960px;top:514px;width:110px">0.000</div><div class="nan" style="top:514px">NaN</div><div class="cb" style="top:517px"></div><div class="ord" style="top:542px">10</div><div class="tb" style="left:835px;top:542px;width:110px">0.000</div><div class="tb" style="left:960px;top:542px;width:110px">0.000</div><div class="nan" style="top:542px">NaN</div><div class="cb" style="top:545px"></div><div class="ord" style="top:571px">37</div><div class="tb" style="left:835px;top:571px;width:110px">0.000</div><div class="tb" style="left:960px;top:571px;width:110px">0.000</div><div class="nan" style="top:571px">NaN</div><div class="cb" style="top:574px"></div><div class="ord" style="top:600px">45</div><div class="tb" style="left:835px;top:600px;width:110px">0.000</div><div class="tb" style="left:960px;top:600px;width:110px">0.000</div><div class="nan" style="top:600px">NaN</div><div class="cb" style="top:603px"></div><div class="ord" style="top:628px">57</div><div class="tb" style="left:835px;top:628px;width:110px">0.000</div><div class="tb" style="left:960px;top:628px;width:110px">0.000</div><div class="nan" style="top:628px">NaN</div><div class="cb" style="top:631px"></div><div class="ord" style="top:657px">67</div><div class="tb" style="left:835px;top:657px;width:110px">0.000</div><div class="tb" style="left:960px;top:657px;width:110px">0.000</div><div class="nan" style="top:657px">NaN</div><div class="cb" style="top:660px"></div><div class="ord" style="top:686px">75</div><div class="tb" style="left:835px;top:686px;width:110px">0.000</div><div class="tb" style="left:960px;top:686px;width:110px">0.000</div><div class="nan" style="top:686px">NaN</div><div class="cb" style="top:689px"></div><div class="ord" style="top:714px">83</div><div class="tb" style="left:835px;top:714px;width:110px">10.000</div><div class="tb" style="left:960px;top:714px;width:110px">0.000</div><div class="nan" style="top:714px">NaN</div><div class="cb" style="top:717px"><svg width="16" height="16" style="position:absolute;left:0;top:0"><path d="M2.4,7.9 L6.5,11.3 L12.3,2.5" stroke="#000" stroke-width="2.8" fill="none" stroke-linejoin="miter"/></svg></div>
<div class="btn" style="left:775px;width:217px">Load</div>
<div class="btn" style="left:1004px;width:216px">Save</div>
</body></html>
